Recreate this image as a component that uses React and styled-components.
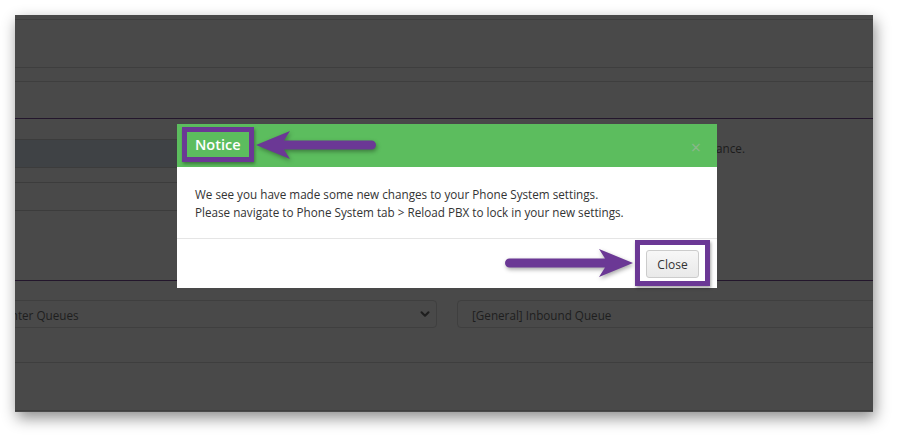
import React from 'react';
import styled, { createGlobalStyle } from 'styled-components';
import { FiChevronDown } from 'react-icons/fi';

const GlobalStyle = createGlobalStyle`
  html, body {
    margin: 0;
    padding: 0;
    background: #ffffff;
    font-family: "Open Sans", "Noto Sans", sans-serif;
  }
`;

const purple = '#6b3895';
const textSize = '11.7px';

const Page = styled.div`
  position: relative;
  width: 898px;
  height: 438px;
  overflow: hidden;
  background: #ffffff;
`;

const Frame = styled.div`
  margin: 15px 0 0 15px;
  width: 858px;
  height: 397px;
  background: #494949;
  overflow: hidden;
  box-shadow: 2px 6px 14px rgba(0, 0, 0, 0.45);
  display: flex;
  flex-direction: column;
`;

const Band = styled.div`
  flex: none;
  height: ${(p) => p.h}px;
  border-bottom: 1px solid ${(p) => (p.accent ? '#23162c' : '#3e3e3e')};
`;

const FormBlock = styled.div`
  flex: none;
  display: flex;
  flex-direction: column;
  gap: 14px;
  padding-top: 20px;
  height: 162px;
  box-sizing: border-box;
  border-bottom: 1px solid #23162c;
`;

const FieldRow = styled.div`
  display: flex;
  align-items: flex-start;
`;

const Input = styled.div`
  flex: none;
  width: 310px;
  height: 27px;
  background: ${(p) => (p.focused ? '#3f4245' : '#494949')};
  border-top: 1px solid #3c3c3c;
  border-bottom: 1px solid #3c3c3c;
`;

const Help = styled.div`
  flex: none;
  width: 420px;
  text-align: right;
  font-size: ${textSize};
  line-height: 18px;
  color: #1c1c1c;
  white-space: nowrap;
`;

const SelectBlock = styled.div`
  flex: none;
  height: 82px;
  box-sizing: border-box;
  padding-top: 19px;
  border-bottom: 1px solid #3e3e3e;
  display: flex;
  gap: 20px;
  margin-left: -56px;
`;

const Select = styled.div`
  flex: none;
  width: ${(p) => p.w}px;
  height: 28px;
  box-sizing: border-box;
  border: 1px solid #3f3f3f;
  border-radius: 4px;
  display: flex;
  align-items: center;
  justify-content: space-between;
  padding: 2px 4px 0 14px;
  font-size: ${textSize};
  color: #1e1e1e;
  white-space: nowrap;
  svg {
    color: #1e1e1e;
    stroke-width: 3.5;
    margin-top: -2px;
  }
`;

const Filler = styled.div`
  flex: none;
  height: 48px;
  box-sizing: border-box;
  border-bottom: 1px solid #3e3e3e;
`;

const Modal = styled.div`
  position: absolute;
  left: 177px;
  top: 124px;
  width: 540px;
  background: #ffffff;
  display: flex;
  flex-direction: column;
`;

const ModalHeader = styled.div`
  height: 43px;
  background: #5cbd5e;
  display: flex;
  align-items: center;
  justify-content: space-between;
  padding: 0 18px;
  box-sizing: border-box;
`;

const Title = styled.h4`
  margin: 0;
  font-size: 14.5px;
  font-weight: 600;
  color: #ffffff;
  line-height: 20px;
  margin-top: -2px;
`;

const CloseX = styled.span`
  font-size: 18px;
  color: #8bb78c;
  line-height: 1;
  margin-top: 2px;
  margin-right: -2px;
`;

const ModalBody = styled.div`
  padding: 18px 18px 17px;
  font-size: ${textSize};
  line-height: 18px;
  color: #333333;
`;

const ModalFooter = styled.div`
  border-top: 1px solid #e5e5e5;
  height: 50px;
  display: flex;
  justify-content: flex-end;
  align-items: flex-start;
  padding: 11px 18px 0;
  box-sizing: border-box;
`;

const Button = styled.button`
  width: 53px;
  height: 28px;
  font-family: "Open Sans", "Noto Sans", sans-serif;
  font-size: 12px;
  color: #333333;
  background: linear-gradient(#f7f7f7, #e9e9e9);
  border: 1px solid #cccccc;
  border-radius: 3px;
  padding: 0;
`;

const Highlight = styled.div`
  position: absolute;
  left: ${(p) => p.x}px;
  top: ${(p) => p.y}px;
  width: ${(p) => p.w}px;
  height: ${(p) => p.h}px;
  box-sizing: border-box;
  border: 5px solid ${purple};
  box-shadow: 1px 2px 3px rgba(0, 0, 0, 0.35);
  pointer-events: none;
`;

const ArrowSvg = styled.svg`
  position: absolute;
  left: ${(p) => p.x}px;
  top: ${(p) => p.y}px;
  overflow: visible;
  filter: drop-shadow(1px 2px 2px rgba(0, 0, 0, 0.35));
`;

function Arrow({ x, y, length, pointLeft }) {
  // drawn pointing right, flipped when needed
  const head = 28;
  const half = 14;
  const shaft = 4.5;
  const d = `M4.5 ${half - shaft} L${length - head} ${half - shaft} L${length - head - 6} 0 L${length} ${half} L${length - head - 6} ${half * 2} L${length - head} ${half + shaft} L4.5 ${half + shaft} A4.5 4.5 0 0 1 4.5 ${half - shaft} Z`;
  return (
    <ArrowSvg x={x} y={y} width={length} height={half * 2} viewBox={`0 0 ${length} ${half * 2}`}>
      <path d={d} fill={purple} transform={pointLeft ? `translate(${length} 0) scale(-1 1)` : undefined} />
    </ArrowSvg>
  );
}

export default function App() {
  return (
    <Page>
      <GlobalStyle />
      <Frame>
        <Band h={4} />
        <Band h={47} />
        <Band h={13} />
        <Band h={36} accent />
        <FormBlock>
          <FieldRow>
            <Input focused />
            <Help>Contact your administrator for assistance.</Help>
          </FieldRow>
          <FieldRow>
            <Input />
          </FieldRow>
        </FormBlock>
        <SelectBlock>
          <Select w={478}>
            <span>Call Center Queues</span>
            <FiChevronDown size={14} />
          </Select>
          <Select w={460}>
            <span>[General] Inbound Queue</span>
          </Select>
        </SelectBlock>
        <Filler />
      </Frame>

      <Modal>
        <ModalHeader>
          <Title>Notice</Title>
          <CloseX>×</CloseX>
        </ModalHeader>
        <ModalBody>
          We see you have made some new changes to your Phone System settings.
          <br />
          Please navigate to Phone System tab &gt; Reload PBX to lock in your new settings.
        </ModalBody>
        <ModalFooter>
          <Button type="button">Close</Button>
        </ModalFooter>
      </Modal>

      <Highlight x={182} y={127} w={72} h={35} />
      <Highlight x={635} y={240} w={75} h={46} />
      <Arrow x={256} y={131} length={120} pointLeft />
      <Arrow x={505} y={249} length={128} />
    </Page>
  );
}
